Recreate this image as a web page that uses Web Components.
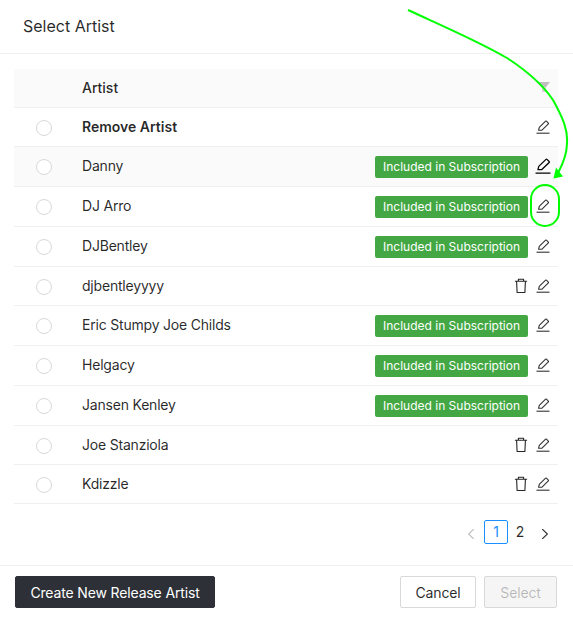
<!DOCTYPE html>
<html lang="en"><head><meta charset="utf-8"><title>Select Artist</title>
<style>
html,body{margin:0;padding:0;background:#fff}
body{font-family:Inter,"Liberation Sans",sans-serif;font-size:14px;color:rgba(0,0,0,.85);width:573px;height:617px;overflow:hidden;position:relative}
</style></head><body>
<select-artist-modal>
  <modal-title slot="title">Select Artist</modal-title>
  <artist-table slot="body">
    <artist-row bold>Remove Artist</artist-row>
    <artist-row tag hover>Danny</artist-row>
    <artist-row tag>DJ Arro</artist-row>
    <artist-row tag>DJBentley</artist-row>
    <artist-row trash>djbentleyyyy</artist-row>
    <artist-row tag>Eric Stumpy Joe Childs</artist-row>
    <artist-row tag>Helgacy</artist-row>
    <artist-row tag>Jansen Kenley</artist-row>
    <artist-row trash>Joe Stanziola</artist-row>
    <artist-row trash>Kdizzle</artist-row>
  </artist-table>
  <page-nav slot="body"></page-nav>
  <ui-button slot="left" variant="dark">Create New Release Artist</ui-button>
  <ui-button slot="right">Cancel</ui-button>
  <ui-button slot="right" variant="disabled">Select</ui-button>
</select-artist-modal>
<callout-arrow></callout-arrow>
<script>
const PEN='<svg width="16" height="16" viewBox="0 0 16 16" fill="none" stroke="currentColor" stroke-width="1.1"><path d="M3.6 11.2 4.3 8.3 10.6 2.2a.6.6 0 0 1 .85 0l1.9 1.9a.6.6 0 0 1 0 .85L7 11.1Z" stroke-linejoin="round"/><path d="M1.5 14.2h13" /></svg>';
const TRASH='<svg width="14" height="16" viewBox="0 0 14 16" fill="none" stroke="currentColor" stroke-width="1.1"><path d="M.9 3.2h12.2M4.4 3V1.3h5.2V3M2.6 3.2l.5 11.3h7.8l.5-11.3" stroke-linejoin="round"/></svg>';
function def(name,html){customElements.define(name,class extends HTMLElement{
  connectedCallback(){if(this.shadowRoot)return;const r=this.attachShadow({mode:'open'});r.innerHTML=typeof html==='function'?html(this):html;}
});}
def('select-artist-modal',`<style>
:host{display:flex;flex-direction:column;height:617px;box-sizing:border-box}
header{height:51px;padding:0 0 2px 23px;border-bottom:1px solid #f0f0f0;display:flex;align-items:center}
main{flex:1;padding:15px 15px 0 14px}
footer{border-top:1px solid #f0f0f0;height:52px;display:flex;justify-content:space-between;align-items:flex-start;padding:10px 16px 0 15px;box-sizing:border-box}
.r{display:flex;gap:8px}
</style><header><slot name="title"></slot></header><main><slot name="body"></slot></main>
<footer><slot name="left"></slot><div class="r"><slot name="right"></slot></div></footer>`);
def('modal-title',`<style>:host{display:block;font-size:16px;font-weight:400;line-height:22px;color:rgba(0,0,0,.85)}</style><slot></slot>`);
def('artist-table',`<style>
:host{display:block;font-size:14px}
.h{display:flex;align-items:center;height:36px;padding:0 8px 2px 68px;background:#fafafa;border-bottom:1px solid #f0f0f0;font-weight:500;justify-content:space-between}
svg{display:block}
</style><div class="h"><span>Artist</span><svg width="12" height="10" viewBox="0 0 12 10"><path d="M0 0h12L8 5H4Z" fill="#bfbfbf"/><path d="M4 5h4v5H4Z" fill="#d4d4d4"/></svg></div><slot></slot>`);
def('artist-row',el=>{
 const tag=el.hasAttribute('tag'),trash=el.hasAttribute('trash'),bold=el.hasAttribute('bold'),hover=el.hasAttribute('hover');
 return `<style>
:host{display:flex;align-items:flex-start;border-bottom:1px solid #f0f0f0;padding:8px 7px 8px 22px;background:${hover?'#fafafa':'#fff'}}
.radio{width:16px;height:16px;box-sizing:border-box;border:1px solid #d9d9d9;border-radius:50%;margin:4px 30px 0 0;background:#fff;flex:none}
.name{flex:1;line-height:22px;font-weight:${bold?600:400};letter-spacing:${bold?0:-.2}px;white-space:nowrap}
.tag{background:#43a843;color:#fff;font-size:12px;line-height:20px;height:22px;box-sizing:border-box;padding:1px 8px 0;border-radius:2px;margin:1px 7px 0 0;white-space:nowrap}
.trash{margin:3px 7px 0 0;color:#262626;height:16px}
.pen{margin:3px 0 0;color:${hover?'#000':'#333'};height:16px;${hover?'transform:scale(1.15);':''}}
svg{display:block}
</style><span class="radio"></span><span class="name"><slot></slot></span>${tag?'<span class="tag">Included in Subscription</span>':''}${trash?`<span class="trash">${TRASH}</span>`:''}<span class="pen">${PEN}</span>`;
});
def('page-nav',`<style>
:host{display:flex;align-items:center;justify-content:flex-end;margin-top:16px;height:24px;padding-right:1px;color:rgba(0,0,0,.85)}
.a{width:24px;height:24px;display:flex;align-items:center;justify-content:center}
.cur{box-sizing:border-box;border:1px solid #1890ff;color:#1890ff;border-radius:2px;line-height:22px}
.n{line-height:22px}
svg{display:block;margin-top:4px}
</style><span class="a" style="margin-right:1px"><svg width="8" height="10" viewBox="0 0 8 10" fill="none" stroke="#bfbfbf" stroke-width="1.1"><path d="M6.8 0 1.6 5l5.2 5"/></svg></span>
<span class="a cur">1</span><span class="a n">2</span><span class="a" style="margin-left:1px"><svg width="8" height="10" viewBox="0 0 8 10" fill="none" stroke="#333" stroke-width="1.1"><path d="M1.2 0 6.4 5l-5.2 5"/></svg></span>`);
def('ui-button',el=>{
 const v=el.getAttribute('variant');
 const s=v==='dark'?'background:#2d3036;color:#fff;border-color:#2d3036;width:200px':v==='disabled'?'background:#f5f5f5;color:rgba(0,0,0,.25);border-color:#d9d9d9;width:73px':'background:#fff;color:rgba(0,0,0,.85);border-color:#d9d9d9;width:76px';
 return `<style>:host{display:block}div{box-sizing:border-box;height:32px;border:1px solid;border-radius:2px;display:flex;align-items:center;justify-content:center;font-size:14px;letter-spacing:-.15px;${s}}</style><div><slot></slot></div>`;
});
def('callout-arrow',`<style>:host{position:absolute;left:0;top:0;width:573px;height:617px;pointer-events:none}svg{display:block}</style>
<svg width="573" height="617" viewBox="0 0 573 617" fill="none"><path d="M408 10C445 27 480 42 507 58C530 73 545 88 553 100C563 118 568 130 567 143C567 152 565 160 558 173" stroke="#00ff00" stroke-width="2"/><path d="M553.5 178.5 563 176.5 556 167.5Z" fill="#00ff00"/><rect x="531" y="185" width="28" height="41" rx="14" stroke="#00ff00" stroke-width="2"/></svg>`);
</script>
</body></html>
